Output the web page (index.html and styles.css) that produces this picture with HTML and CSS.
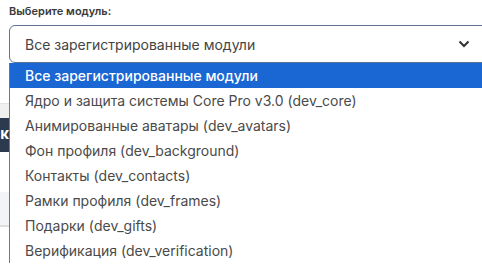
FILE: index.html
```html
<!DOCTYPE html>
<html lang="ru">

<head>
    <meta charset="UTF-8">
    <meta name="viewport" content="width=device-width, initial-scale=1.0">
    <title>Модули</title>
    <link rel="stylesheet" href="styles.css">
</head>

<body>
    <div class="field">
        <label class="field-label">Выберите модуль:</label>
        <div class="select">
            <span class="select-value">Все зарегистрированные модули</span>
            <svg class="select-arrow" width="12" height="8" viewBox="0 0 12 8">
                <path d="M1.5 1.5 L6 6 L10.5 1.5" fill="none" stroke="#333" stroke-width="2" />
            </svg>
        </div>

        <ul class="options">
            <li class="option-selected">Все зарегистрированные модули</li>
            <li>Ядро и защита системы Core Pro v3.0 (dev_core)</li>
            <li>Анимированные аватары (dev_avatars)</li>
            <li>Фон профиля (dev_background)</li>
            <li>Контакты (dev_contacts)</li>
            <li>Рамки профиля (dev_frames)</li>
            <li>Подарки (dev_gifts)</li>
            <li>Верификация (dev_verification)</li>
        </ul>
    </div>

    <!-- то, что под выпадающим списком -->
    <div class="page">
        <div class="page-head"></div>
        <div class="toolbar">
            <span class="btn-dark">Поиск</span>
        </div>
        <div class="row-gap"></div>
        <div class="row-light"></div>
    </div>
</body>

</html>
```

FILE: styles.css
```css
* {
    margin: 0;
    padding: 0;
    box-sizing: border-box;
}

body {
    width: 482px;
    height: 264px;
    overflow: hidden;
    background: #fff;
    font-family: Inter, "Noto Sans", sans-serif;
    color: #444;
}

.field {
    position: relative;
    padding: 4px 0 0 9px;
}

.field-label {
    display: block;
    font-size: 11px;
    font-weight: 600;
    color: #3a3a3a;
    line-height: 14px;
}

.select {
    display: flex;
    align-items: center;
    justify-content: space-between;
    height: 38px;
    margin-top: 7px;
    margin-right: -6px;
    padding: 0 14px 0 15px;
    border: 1px solid #5c7393;
    border-radius: 6px;
    background: #fff;
}

.select-value {
    font-size: 14px;
    color: #444;
}

.select-arrow {
    margin-right: 3px;
}

.options {
    position: absolute;
    left: 9px;
    top: 63px;
    width: 490px;
    list-style: none;
    background: #fff;
    border-left: 1px solid #777;
    z-index: 2;
}

.options li {
    height: 25px;
    line-height: 25px;
    padding-left: 15px;
    font-size: 14px;
    color: #4a4a4a;
    white-space: nowrap;
}

.options .option-selected {
    background: #1a66d2;
    color: #fff;
    font-weight: 500;
}

.page {
    margin-top: 40px;
}

.page-head {
    height: 15px;
    background: #f0f0f0;
    border-top: 1px solid #e2e2e2;
}

.toolbar {
    height: 34px;
    overflow: hidden;
}

.btn-dark {
    display: block;
    width: 90px;
    height: 34px;
    margin-left: -80px;
    padding-right: 1px;
    background: #2b3a4e;
    color: #fff;
    font-size: 15px;
    font-weight: 700;
    line-height: 32px;
    text-align: right;
}

.row-gap {
    height: 40px;
}

.row-light {
    height: 35px;
    background: #f3f4f8;
    border-bottom: 2px solid #dedede;
}
```
